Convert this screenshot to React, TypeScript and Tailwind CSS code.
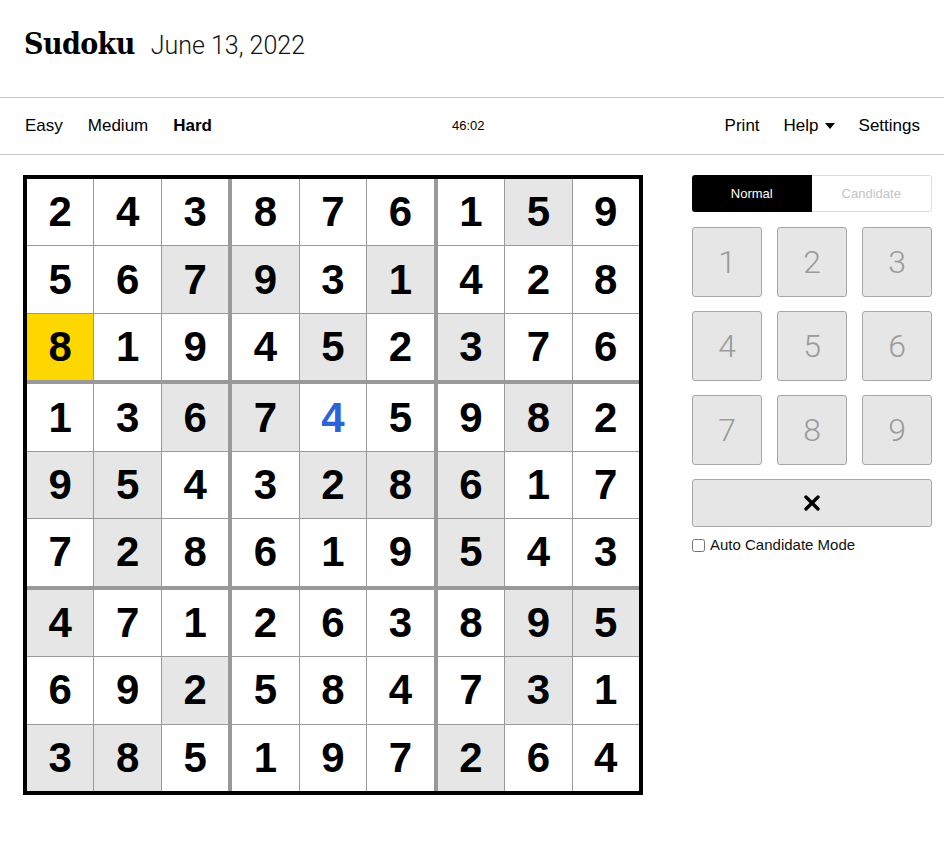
import { useState } from 'react';

const board = [
  [2, 4, 3, 8, 7, 6, 1, 5, 9],
  [5, 6, 7, 9, 3, 1, 4, 2, 8],
  [8, 1, 9, 4, 5, 2, 3, 7, 6],
  [1, 3, 6, 7, 4, 5, 9, 8, 2],
  [9, 5, 4, 3, 2, 8, 6, 1, 7],
  [7, 2, 8, 6, 1, 9, 5, 4, 3],
  [4, 7, 1, 2, 6, 3, 8, 9, 5],
  [6, 9, 2, 5, 8, 4, 7, 3, 1],
  [3, 8, 5, 1, 9, 7, 2, 6, 4],
];

const shaded = new Set([
  '0-7',
  '1-2', '1-3', '1-5',
  '2-4', '2-6',
  '3-2', '3-3', '3-7',
  '4-0', '4-1', '4-4', '4-5', '4-6',
  '5-1', '5-6',
  '6-0', '6-7', '6-8',
  '7-2', '7-7',
  '8-0', '8-1', '8-6',
]);

const selected = '2-0';
const userEntered = '3-4';

function Cell({ r, c }: { r: number; c: number }) {
  const key = `${r}-${c}`;
  let bg = 'bg-white';
  if (key === selected) bg = 'bg-[#ffd700]';
  else if (shaded.has(key)) bg = 'bg-[#e6e6e6]';
  const color = key === userEntered ? 'text-[#2d63d8]' : 'text-black';
  return (
    <div className={`${bg} ${color} flex items-center justify-center text-[42px] font-bold leading-none`}>
      {board[r][c]}
    </div>
  );
}

function Box({ br, bc }: { br: number; bc: number }) {
  const cells = [];
  for (let i = 0; i < 3; i++) {
    for (let j = 0; j < 3; j++) {
      cells.push(<Cell key={`${i}-${j}`} r={br * 3 + i} c={bc * 3 + j} />);
    }
  }
  return <div className="grid grid-cols-3 grid-rows-3 gap-px">{cells}</div>;
}

export default function App() {
  const [autoCandidate, setAutoCandidate] = useState(false);
  const [mode, setMode] = useState<'normal' | 'candidate'>('normal');

  return (
    <div className="w-[944px] min-h-[853px] bg-white text-black font-['Liberation_Sans',Arial,sans-serif]">
      {/* Header */}
      <header className="h-[97px] flex items-start pt-[24px] px-6 gap-4">
        <h1 className="font-['DejaVu_Serif_Condensed','DejaVu_Serif',serif] font-bold text-[30px] leading-[40px] tracking-[-0.6px]">
          Sudoku
        </h1>
        <span className="font-['Roboto',sans-serif] font-light text-[25px] leading-[40px] mt-[2px] text-[#121212]">
          June 13, 2022
        </span>
      </header>

      {/* Nav */}
      <nav className="h-[58px] border-y border-[#c7c7c7] flex items-center justify-between px-[24px] text-[17px]">
        <div className="flex items-center gap-[25px] pl-px">
          <span>Easy</span>
          <span>Medium</span>
          <span className="font-bold">Hard</span>
        </div>
        <div className="text-[13px]">46:02</div>
        <div className="flex items-center gap-[24px]">
          <span>Print</span>
          <span className="flex items-center gap-[6px]">
            Help
            <svg width="10" height="6" viewBox="0 0 10 6">
              <path d="M0 0h10L5 6z" fill="#000" />
            </svg>
          </span>
          <span>Settings</span>
        </div>
      </nav>

      {/* Main */}
      <main className="flex items-start pt-[20px] pl-[23px] gap-[49px]">
        <div className="w-[620px] h-[620px] border-4 border-black bg-[#999999] grid grid-cols-3 grid-rows-3 gap-[4px]">
          {[0, 1, 2].map((br) =>
            [0, 1, 2].map((bc) => <Box key={`${br}-${bc}`} br={br} bc={bc} />)
          )}
        </div>

        <div className="w-[240px] flex flex-col">
          <div className="flex h-[37px] text-[13px] rounded-[3px] overflow-hidden">
            <button
              onClick={() => setMode('normal')}
              className="flex-1 bg-black text-white"
            >
              Normal
            </button>
            <button
              onClick={() => setMode('candidate')}
              className="flex-1 bg-white text-[#c4c4c4] border border-l-0 border-[#dcdcdc] rounded-r-[3px]"
            >
              Candidate
            </button>
          </div>

          <div className="grid grid-cols-3 gap-x-[15px] gap-y-[14px] mt-[15px]">
            {[1, 2, 3, 4, 5, 6, 7, 8, 9].map((n) => (
              <button
                key={n}
                className="h-[70px] bg-[#e6e6e6] border border-[#a6a6a6] rounded-[3px] text-[#9a9a9a] text-[32px] font-['Roboto',sans-serif] font-light flex items-center justify-center"
              >
                {n}
              </button>
            ))}
          </div>

          <button className="mt-[14px] h-[48px] bg-[#e6e6e6] border border-[#a6a6a6] rounded-[3px] flex items-center justify-center">
            <svg width="18" height="18" viewBox="0 0 18 18">
              <path d="M3 3L15 15M15 3L3 15" stroke="#000" strokeWidth="3.4" strokeLinecap="round" />
            </svg>
          </button>

          <label className="mt-[7px] flex items-center gap-[5px] text-[15px] text-[#121212]">
            <input
              type="checkbox"
              checked={autoCandidate}
              onChange={(e) => setAutoCandidate(e.target.checked)}
              className="w-[13px] h-[13px] m-0"
            />
            Auto Candidate Mode
          </label>
          <span className="hidden">{mode}</span>
        </div>
      </main>
    </div>
  );
}
